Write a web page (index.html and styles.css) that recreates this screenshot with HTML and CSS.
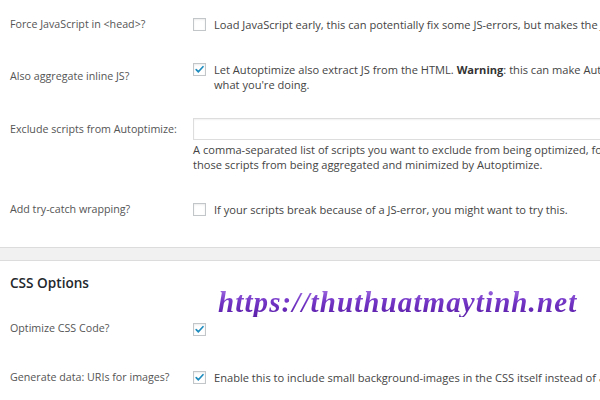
FILE: index.html
```html
<!DOCTYPE html>
<html lang="en">
<head>
<meta charset="utf-8">
<title>Autoptimize settings</title>
<link rel="stylesheet" href="styles.css">
</head>
<body>
<div class="page">
  <div class="form-table">
    <div class="row">
      <div class="th">Force JavaScript in &lt;head&gt;?</div>
      <div class="td">
        <label class="check-line"><span class="cb"></span><span class="desc">Load JavaScript early, this can potentially fix some JS-errors, but makes the JS render blocking.</span></label>
      </div>
    </div>
    <div class="row">
      <div class="th th-low">Also aggregate inline JS?</div>
      <div class="td">
        <label class="check-line"><span class="cb checked"><svg viewBox="0 0 13 13"><path d="M2.6 6.6 L5.2 9.2 L10.6 3.2"/></svg></span><span class="desc">Let Autoptimize also extract JS from the HTML. <b>Warning</b>: this can make Autoptimize's cache size grow quickly, so only enable this if you know<br>what you're doing.</span></label>
      </div>
    </div>
    <div class="row">
      <div class="th">Exclude scripts from Autoptimize:</div>
      <div class="td">
        <div class="text-input"></div>
        <div class="desc">A comma-separated list of scripts you want to exclude from being optimized, for example 'whatever.js, another.js' (without the quotes) to exclude<br>those scripts from being aggregated and minimized by Autoptimize.</div>
      </div>
    </div>
    <div class="row">
      <div class="th">Add try-catch wrapping?</div>
      <div class="td">
        <label class="check-line"><span class="cb"></span><span class="desc">If your scripts break because of a JS-error, you might want to try this.</span></label>
      </div>
    </div>
  </div>

  <div class="band"></div>

  <h2 class="section-title">CSS Options</h2>

  <div class="form-table">
    <div class="row">
      <div class="th">Optimize CSS Code?</div>
      <div class="td">
        <label class="check-line"><span class="cb checked"><svg viewBox="0 0 13 13"><path d="M2.6 6.6 L5.2 9.2 L10.6 3.2"/></svg></span></label>
      </div>
    </div>
    <div class="row">
      <div class="th">Generate data: URIs for images?</div>
      <div class="td">
        <label class="check-line"><span class="cb checked"><svg viewBox="0 0 13 13"><path d="M2.6 6.6 L5.2 9.2 L10.6 3.2"/></svg></span><span class="desc">Enable this to include small background-images in the CSS itself instead of as separate downloads.</span></label>
      </div>
    </div>
  </div>

  <div class="watermark">https://thuthuatmaytinh.net</div>
</div>
</body>
</html>
```

FILE: styles.css
```css
html, body {
  margin: 0;
  padding: 0;
  overflow: hidden;
  background: #ffffff;
}

body {
  font-family: "Open Sans", "Noto Sans", sans-serif;
  font-size: 10.5px;
  color: #444444;
  width: 600px;
  height: 400px;
}

.page {
  position: relative;
  width: 600px;
  height: 400px;
  overflow: hidden;
}

.form-table {
  display: flex;
  flex-direction: column;
}

.row {
  display: grid;
  grid-template-columns: 193px 1fr;
}

.th {
  align-self: start;
  padding: 16px 0 17px 10px;
  line-height: 16px;
  font-size: 10.7px;
  color: #555555;
  white-space: nowrap;
}

.th-low {
  padding-top: 19px;
  padding-bottom: 14px;
}

.td {
  align-self: center;
  padding: 13px 0;
  line-height: 15px;
  font-size: 11.1px;
  min-width: 0;
}

.check-line {
  display: flex;
  align-items: flex-start;
}

.cb {
  flex: none;
  box-sizing: border-box;
  width: 13px;
  height: 13px;
  margin-top: 1px;
  margin-right: 8px;
  border: 1px solid #c3c6c9;
  background: #ffffff;
  box-shadow: inset 0 1px 2px rgba(0, 0, 0, 0.08);
  display: flex;
  align-items: center;
  justify-content: center;
}

.cb svg {
  width: 11px;
  height: 11px;
}

.cb svg path {
  fill: none;
  stroke: #1e8cbe;
  stroke-width: 2;
  stroke-linecap: round;
  stroke-linejoin: round;
}

.desc {
  white-space: nowrap;
}

.desc b {
  font-weight: 700;
  color: #333333;
}

.text-input {
  box-sizing: border-box;
  height: 22px;
  width: 600px;
  border: 1px solid #dddddd;
  box-shadow: inset 0 1px 2px rgba(0, 0, 0, 0.06);
  margin-bottom: 2px;
}

.band {
  margin-top: 13px;
  height: 12px;
  background: #f1f1f1;
  border-top: 1px solid #dcdcdc;
  border-bottom: 1px solid #dcdcdc;
}

.section-title {
  margin: 12px 0 11px 10px;
  font-size: 13.6px;
  line-height: 20px;
  font-weight: 600;
  color: #23282d;
}

.watermark {
  position: absolute;
  left: 218px;
  top: 287px;
  font-family: "Liberation Serif", "DejaVu Serif", serif;
  font-style: italic;
  font-weight: 700;
  font-size: 29px;
  letter-spacing: 1.1px;
  line-height: 30px;
  white-space: nowrap;
  color: #6a2bbd;
  background: linear-gradient(to bottom, #a877e6 0%, #7638c8 45%, #5a1ea8 100%);
  -webkit-background-clip: text;
  background-clip: text;
  -webkit-text-fill-color: transparent;
}
```
